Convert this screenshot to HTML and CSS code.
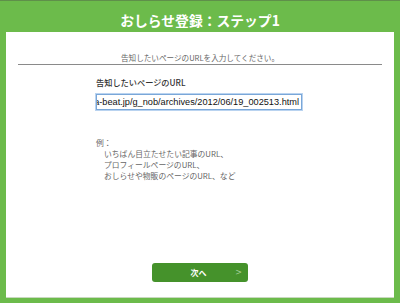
FILE: index.html
```html
<!DOCTYPE html>
<html lang="ja">
<head>
    <meta charset="UTF-8">
    <meta name="viewport" content="width=device-width, initial-scale=1.0">
    <title>おしらせ登録：ステップ1</title>
    <link rel="stylesheet" href="styles.css">
</head>
<body>
    <header class="header">
        <h1 class="title">おしらせ登録：ステップ1</h1>
    </header>
    <main class="panel">
        <p class="lead">告知したいページのURLを入力してください。</p>
        <div class="form">
            <label class="label" for="urlField">告知したいページのURL</label>
            <div class="url-field" id="urlField"><span>http://www.a-beat.jp/g_nob/archives/2012/06/19_002513.html</span></div>
            <div class="example">
                <p class="example-head">例：</p>
                <p class="example-line">いちばん目立たせたい記事のURL、</p>
                <p class="example-line">プロフィールページのURL、</p>
                <p class="example-line">おしらせや物販のページのURL、など</p>
            </div>
        </div>
        <button class="next-button">
            <span></span>
            <span class="next-label">次へ</span>
            <span class="next-arrow">&gt;</span>
        </button>
    </main>
</body>
</html>
```

FILE: styles.css
```css
* {
    box-sizing: border-box;
}
body {
    margin: 0;
    height: 303px;
    display: flex;
    flex-direction: column;
    background-color: #6cbb4b;
    border-top: 1px solid #5f8f4a;
    font-family: 'Noto Sans CJK JP', 'Liberation Sans', sans-serif;
    color: #333;
}
.header {
    height: 31px;
    padding-top: 7px;
}
.title {
    margin: 0;
    text-align: center;
    color: #fff;
    font-size: 13.8px;
    line-height: 24px;
    font-weight: bold;
}
.panel {
    flex: 1;
    margin: 0 6px 5px;
    padding: 0 12px 15px;
    background-color: #fff;
    border-bottom: 1px solid #c9d9c0;
    display: flex;
    flex-direction: column;
}
.lead {
    margin: 0;
    padding-top: 20px;
    line-height: 12px;
    font-size: 7.6px;
    color: #666;
    text-align: center;
    border-bottom: 1px solid #8a8a8a;
}
.form {
    padding-left: 78px;
}
.label {
    display: block;
    margin-top: 11px;
    line-height: 12px;
    font-size: 8.2px;
    font-weight: 500;
    color: #333;
}
.url-field {
    margin-top: 6px;
    width: 206px;
    height: 16px;
    padding: 0 2px;
    border: 1px solid #7aa7d8;
    box-shadow: 0 0 0 1px #b9d3f0;
    display: flex;
    align-items: center;
    justify-content: flex-end;
    overflow: hidden;
    white-space: nowrap;
    font-family: 'Liberation Sans', sans-serif;
    font-size: 9.2px;
    color: #111;
}
.example {
    margin-top: 27px;
    font-size: 7.8px;
    color: #666;
}
.example p {
    margin: 0;
    line-height: 11px;
}
.example-line {
    padding-left: 8px;
}
.next-button {
    margin: auto auto 0;
    width: 96px;
    height: 19px;
    padding: 0 6px 0 8px;
    border: none;
    border-radius: 3px;
    background-color: #45922b;
    display: grid;
    grid-template-columns: 1fr auto 1fr;
    align-items: center;
    font-family: inherit;
    cursor: pointer;
}
.next-label {
    color: #fff;
    font-size: 8px;
    font-weight: bold;
    padding-right: 5px;
}
.next-arrow {
    justify-self: end;
    color: #a8cf98;
    font-family: 'DejaVu Sans', sans-serif;
    font-size: 8px;
}
```
